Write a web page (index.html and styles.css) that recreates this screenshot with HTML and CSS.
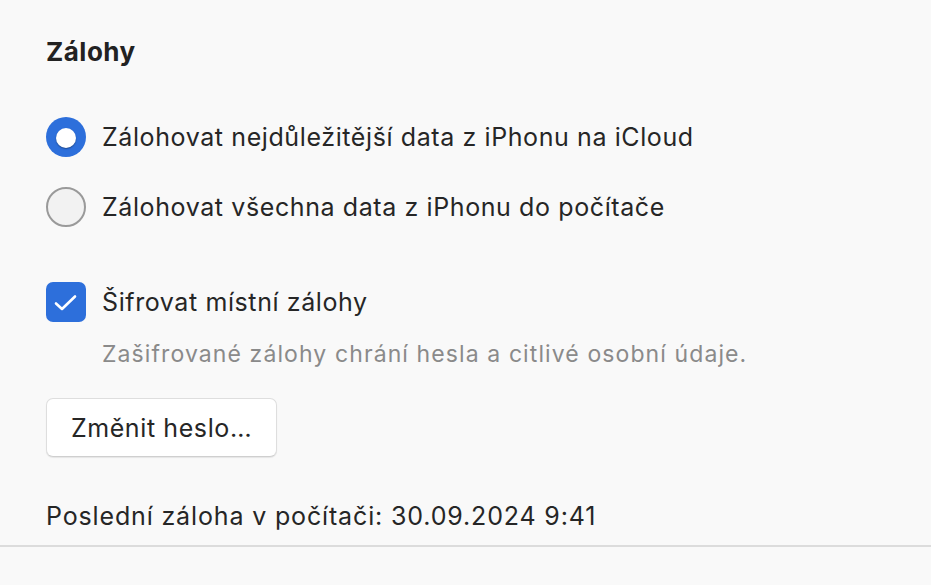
FILE: index.html
```html
<!DOCTYPE html>
<html lang="cs">
<head>
<meta charset="utf-8">
<link rel="stylesheet" href="styles.css">
</head>
<body>
<div class="panel">
  <h1 class="title">Zálohy</h1>
  <div class="options">
    <div class="row"><span class="radio on"></span><span class="label">Zálohovat nejdůležitější data z iPhonu na iCloud</span></div>
    <div class="row"><span class="radio"></span><span class="label">Zálohovat všechna data z iPhonu do počítače</span></div>
  </div>
  <div class="row check-row">
    <span class="check"><svg width="40" height="40" viewBox="0 0 40 40"><path d="M10 21.5 L16 27 L29 14.5" fill="none" stroke="#fff" stroke-width="2.6" stroke-linecap="round" stroke-linejoin="round"/></svg></span>
    <span class="label">Šifrovat místní zálohy</span>
  </div>
  <div class="desc">Zašifrované zálohy chrání hesla a citlivé osobní údaje.</div>
  <button class="btn">Změnit heslo…</button>
  <div class="last">Poslední záloha v počítači: 30.09.2024 9:41</div>
</div>
<div class="sep"></div>
</body>
</html>
```

FILE: styles.css
```css
html, body {
  margin: 0;
  padding: 0;
  background: #f9f9f9;
  font-family: Inter, "Liberation Sans", Arial, sans-serif;
  color: #262626;
}
.panel {
  padding: 36px 0 0 46px;
  display: flex;
  flex-direction: column;
  align-items: flex-start;
}
.panel > * {
  flex: none;
}
.title {
  margin: 0;
  font-size: 26px;
  font-weight: 700;
  letter-spacing: 0.5px;
  line-height: 32px;
  color: #222;
}
.options {
  margin-top: 49px;
  display: flex;
  flex-direction: column;
  gap: 30px;
}
.row {
  display: flex;
  align-items: center;
  gap: 16px;
  height: 40px;
}
.label {
  font-size: 25px;
  letter-spacing: 0.6px;
  line-height: 30px;
}
.radio {
  width: 40px;
  height: 40px;
  border-radius: 50%;
  box-sizing: border-box;
  border: 2px solid #9a9a9a;
  background: #f2f2f2;
  flex: none;
  display: flex;
  align-items: center;
  justify-content: center;
}
.radio.on {
  border: none;
  background: #2d6fdb;
}
.radio.on::after {
  content: "";
  width: 20px;
  height: 20px;
  margin-top: 1px;
  border-radius: 50%;
  background: #fff;
  box-shadow: 0 1px 1.5px rgba(0,0,0,0.35);
}
.check-row {
  margin-top: 55px;
}
.check {
  width: 40px;
  height: 40px;
  border-radius: 7px;
  background: #2d6fdb;
  display: flex;
  align-items: center;
  justify-content: center;
  flex: none;
}
.desc {
  margin-top: 18px;
  margin-left: 56px;
  font-size: 23px;
  letter-spacing: 1.1px;
  line-height: 28px;
  color: #8a8a8a;
}
.btn {
  margin-top: 30px;
  width: 231px;
  height: 59px;
  box-sizing: border-box;
  border: 1px solid #dedede;
  border-bottom-color: #cfcfcf;
  border-radius: 7px;
  background: #fff;
  box-shadow: 0 1px 1px rgba(0,0,0,0.08);
  font-family: inherit;
  font-size: 25px;
  letter-spacing: 0.6px;
  color: #262626;
  padding: 0;
}
.last {
  margin-top: 44px;
  font-size: 25px;
  letter-spacing: 0.85px;
  line-height: 30px;
}
.sep {
  height: 2px;
  background: #dcdcdc;
  margin-top: 14px;
}
```
